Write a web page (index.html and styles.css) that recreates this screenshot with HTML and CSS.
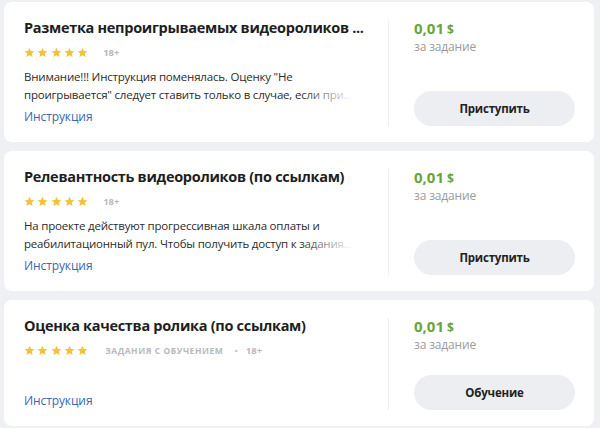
FILE: index.html
```html
<!DOCTYPE html>
<html lang="ru">
<head>
    <meta charset="UTF-8">
    <meta name="viewport" content="width=device-width, initial-scale=1.0">
    <title>Задания</title>
    <link rel="stylesheet" href="styles.css">
</head>
<body>
    <svg class="sprite" xmlns="http://www.w3.org/2000/svg">
        <symbol id="star" viewBox="0 0 24 24">
            <path d="M12 1.5l3.1 7.1 7.7.7-5.8 5.1 1.7 7.6L12 18l-6.7 4 1.7-7.6-5.8-5.1 7.7-.7z"/>
        </symbol>
    </svg>

    <div class="task">
        <div class="task-main">
            <div class="task-title">Разметка непроигрываемых видеороликов ...</div>
            <div class="task-meta">
                <span class="stars">
                    <svg><use href="#star"/></svg><svg><use href="#star"/></svg><svg><use href="#star"/></svg><svg><use href="#star"/></svg><svg><use href="#star"/></svg>
                </span>
                <span class="tag">18+</span>
            </div>
            <div class="task-desc">Внимание!!! Инструкция поменялась. Оценку "Не проигрывается" следует ставить только в случае, если при...</div>
            <a class="task-link" href="#">Инструкция</a>
        </div>
        <div class="task-side">
            <div class="price">0,01<span class="currency">$</span></div>
            <div class="price-note">за задание</div>
            <button class="task-btn">Приступить</button>
        </div>
    </div>

    <div class="task">
        <div class="task-main">
            <div class="task-title">Релевантность видеороликов (по ссылкам)</div>
            <div class="task-meta">
                <span class="stars">
                    <svg><use href="#star"/></svg><svg><use href="#star"/></svg><svg><use href="#star"/></svg><svg><use href="#star"/></svg><svg><use href="#star"/></svg>
                </span>
                <span class="tag">18+</span>
            </div>
            <div class="task-desc">На проекте действуют прогрессивная шкала оплаты и реабилитационный пул. Чтобы получить доступ к задания...</div>
            <a class="task-link" href="#">Инструкция</a>
        </div>
        <div class="task-side">
            <div class="price">0,01<span class="currency">$</span></div>
            <div class="price-note">за задание</div>
            <button class="task-btn">Приступить</button>
        </div>
    </div>

    <div class="task">
        <div class="task-main">
            <div class="task-title">Оценка качества ролика (по ссылкам)</div>
            <div class="task-meta">
                <span class="stars">
                    <svg><use href="#star"/></svg><svg><use href="#star"/></svg><svg><use href="#star"/></svg><svg><use href="#star"/></svg><svg><use href="#star"/></svg>
                </span>
                <span class="tag tag-caps">Задания с обучением</span>
                <span class="dot">•</span>
                <span class="tag tag-after">18+</span>
            </div>
            <a class="task-link" href="#">Инструкция</a>
        </div>
        <div class="task-side">
            <div class="price">0,01<span class="currency">$</span></div>
            <div class="price-note">за задание</div>
            <button class="task-btn">Обучение</button>
        </div>
    </div>
</body>
</html>
```

FILE: styles.css
```css
body {
    margin: 0;
    padding: 2px 6px 0 4px;
    background-color: #eef0f3;
    font-family: "Open Sans", "Liberation Sans", sans-serif;
    color: #222;
    display: flex;
    flex-direction: column;
    gap: 9px;
}

.sprite {
    position: absolute;
    width: 0;
    height: 0;
}

.task {
    display: flex;
    background-color: #fff;
    border-radius: 8px;
    padding: 18px 0 16px 20px;
}

.task-main {
    flex: 1;
    display: flex;
    flex-direction: column;
    padding-right: 24px;
    min-width: 0;
}

.task-title {
    font-size: 14.5px;
    font-weight: 700;
    line-height: 16px;
    letter-spacing: -0.3px;
    color: #1e1e1e;
    white-space: nowrap;
}

.task-meta {
    display: flex;
    align-items: center;
    height: 14px;
    margin-top: 9px;
}

.stars {
    display: flex;
    gap: 2.3px;
}

.stars svg {
    width: 11px;
    height: 11px;
    fill: #f3c23b;
}

.tag {
    margin-left: 15px;
    font-size: 9.5px;
    font-weight: 700;
    color: #b7b9bd;
}

.tag-caps {
    margin-left: 17px;
    font-size: 8.5px;
    text-transform: uppercase;
    letter-spacing: 0.55px;
}

.dot {
    margin-left: 11px;
    font-size: 9px;
    color: #b7b9bd;
}

.tag-after {
    margin-left: 8px;
}

.task-desc {
    position: relative;
    margin-top: 9px;
    font-size: 11.5px;
    line-height: 18px;
    letter-spacing: -0.2px;
    color: #2b2b2b;
}

/* fade on the last line */
.task-desc::after {
    content: "";
    position: absolute;
    right: 0;
    bottom: 0;
    width: 64px;
    height: 18px;
    background: linear-gradient(to right, rgba(255, 255, 255, 0), #fff 85%);
}

.task-link {
    margin-top: auto;
    padding-top: 4px;
    font-size: 12px;
    line-height: 18px;
    letter-spacing: -0.1px;
    color: #3a66b2;
    text-decoration: none;
}

.task-side {
    width: 206px;
    box-sizing: border-box;
    border-left: 1px solid #efefef;
    padding: 0 19px 0 25px;
    display: flex;
    flex-direction: column;
}

.price {
    font-size: 15px;
    font-weight: 700;
    line-height: 17px;
    color: #69a53a;
}

.currency {
    font-size: 12px;
    margin-left: 3px;
}

.price-note {
    font-size: 12px;
    line-height: 17px;
    letter-spacing: -0.15px;
    color: #9b9b9b;
    margin-bottom: 22px;
}

.task-btn {
    margin-top: auto;
    height: 35px;
    flex-shrink: 0;
    border: none;
    border-radius: 18px;
    background-color: #eceef1;
    font-family: inherit;
    font-size: 11.5px;
    font-weight: 700;
    letter-spacing: -0.2px;
    color: #222;
    cursor: pointer;
}
```
